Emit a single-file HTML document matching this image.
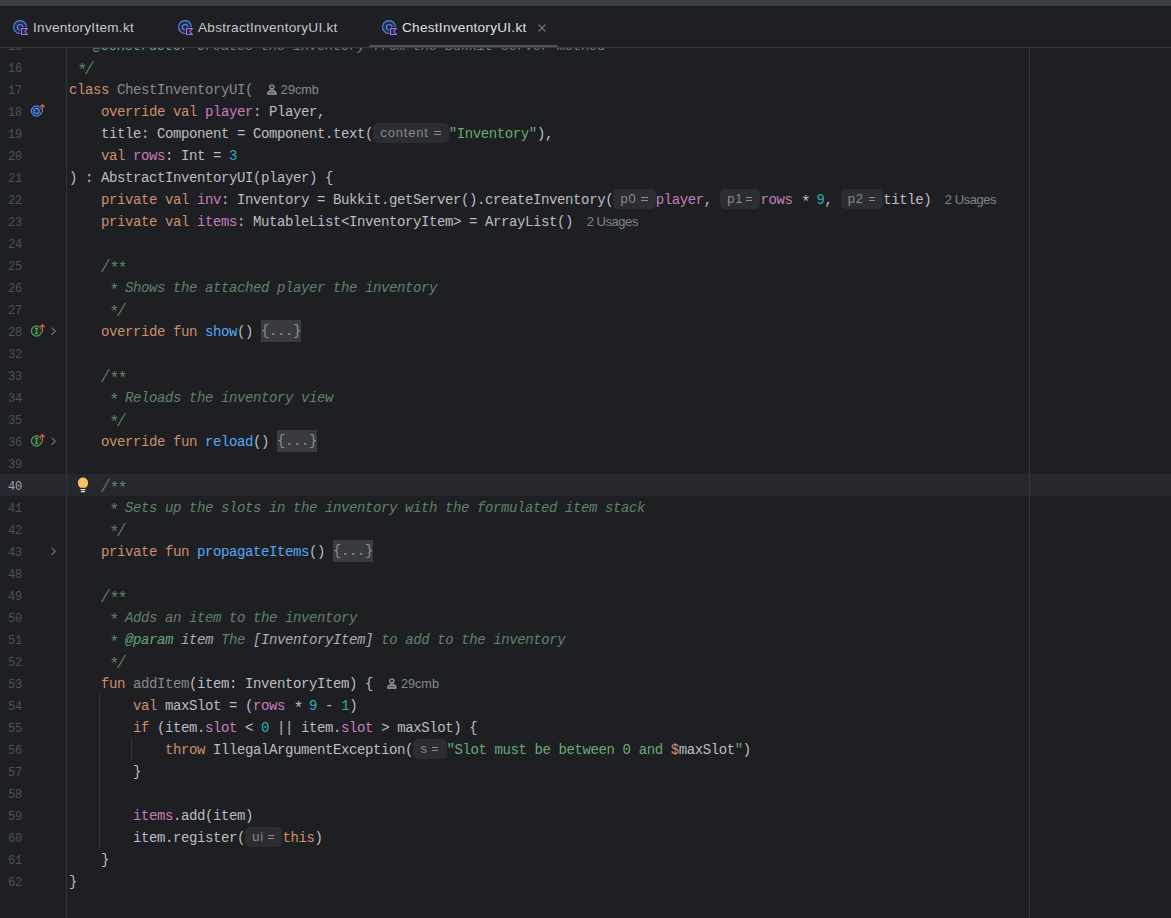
<!DOCTYPE html>
<html><head><meta charset="utf-8"><style>
*{margin:0;padding:0;box-sizing:border-box}
html,body{width:1171px;height:918px;overflow:hidden;background:#1e1f22}
body{position:relative;font-family:"Liberation Sans",sans-serif}
#top{position:absolute;left:0;top:0;width:1171px;height:6px;background:#3c3f43}
#tabs{position:absolute;left:0;top:6px;width:1171px;height:41px;background:#1e1f22;z-index:5}
#tabborder{position:absolute;left:0;top:47px;width:1171px;height:1px;background:#393b40;z-index:6}
.tab{position:absolute;top:13.5px;font-size:13.6px;letter-spacing:0.27px;color:#c4c7cd;line-height:16px;white-space:nowrap}
.ticon{position:absolute}
#uline{position:absolute;left:369px;top:39px;width:189px;height:3px;border-radius:2px;background:#4e5157}
#close{position:absolute;left:537px;top:16.5px}
#editor{position:absolute;left:0;top:48px;width:1171px;height:870px;overflow:hidden}
.row{position:absolute;left:0;width:1171px;height:22px}
.row.cur{background:#26282e}
.ln{position:absolute;left:0;width:22px;text-align:right;top:2px;font-family:"Liberation Mono",monospace;font-size:12px;letter-spacing:-0.2px;line-height:22px;color:#4b5059}
.row.cur .ln{color:#a1a3ab}
.code{position:absolute;left:69px;top:1px;font-family:"Liberation Mono",monospace;font-size:14px;letter-spacing:-0.4px;line-height:22px;white-space:pre;color:#bcbec4}
.k{color:#cf8e6d} .t{color:#bcbec4} .p{color:#c77dbb} .f{color:#56a8f5} .s{color:#6aab73} .n{color:#2aacb8}
.c{color:#5f826b;font-style:italic} .u{color:#868a91} .tag{color:#67a37c;font-style:italic} .docv{color:#abadb3;font-style:italic} .docl{color:#abadb3;font-style:italic}
.hint{display:inline-block;font-family:"Liberation Sans",sans-serif;font-size:13px;letter-spacing:0;color:#868a91;background:#2b2d30;border-radius:5px;height:19.5px;line-height:20px;padding:0;margin:0;vertical-align:top;margin-top:0px;position:relative;top:0px}
.hl{position:absolute;left:7.3px;top:0;letter-spacing:0.8px} .he{position:absolute;right:8.3px;top:8.3px;width:6.4px;height:4px;border-top:1.1px solid #868a91;border-bottom:1.1px solid #868a91}
.usg{display:inline-block;font-family:"Liberation Sans",sans-serif;font-size:13px;letter-spacing:-0.45px;color:#80848b;margin-left:13.5px;vertical-align:top}
.auth{display:inline-block;position:relative;font-family:"Liberation Sans",sans-serif;font-size:12.7px;letter-spacing:0;color:#868a91;padding-left:27.8px;vertical-align:top}
.auth svg{position:absolute;left:14.2px;top:4px}
.fold{display:inline-block;color:#8c9098;background:#393b40;border-radius:0;height:22px;line-height:22px;margin-top:-1px;vertical-align:top}
#gsep{position:absolute;left:66px;top:48px;width:1px;height:870px;background:#313438;z-index:1}
#margin{position:absolute;left:1029px;top:48px;width:1px;height:870px;background:#393b40;z-index:1}
.guide{position:absolute;width:1px;background:#313438;z-index:1}
.gi{position:absolute;z-index:3}
.ast{display:inline-block;width:8px;font-style:normal;font-size:16px;position:relative;top:2.5px;text-align:center;text-indent:0.6px} .sl{display:inline-block;transform:scaleY(1.35) translateY(0.6px)}
#rowsbox{position:absolute;left:0;top:0}
</style></head><body>
<div id="top"></div>
<div id="tabs">
<svg class="ticon" style="left:12px;top:13px" width="18" height="18" viewBox="0 0 18 18">
<circle cx="8" cy="8" r="6.4" fill="#24304a" stroke="#548af7" stroke-width="1.05"/>
<path d="M11 8.2A2.8 2.8 0 1 0 8.2 11" fill="none" stroke="#548af7" stroke-width="1.05"/>
<rect x="8.3" y="8.3" width="8.4" height="8.4" fill="#1e1f22"/>
<path d="M9.5 9.5h5.8l-2.4 3 2.4 3H9.5z" fill="#2b2540" stroke="#a873ec" stroke-width="1.05" stroke-linejoin="miter"/>
</svg><div class="tab" style="left:33px">InventoryItem.kt</div>
<svg class="ticon" style="left:177px;top:13px" width="18" height="18" viewBox="0 0 18 18">
<circle cx="8" cy="8" r="6.4" fill="#24304a" stroke="#548af7" stroke-width="1.05"/>
<path d="M11 8.2A2.8 2.8 0 1 0 8.2 11" fill="none" stroke="#548af7" stroke-width="1.05"/>
<rect x="8.3" y="8.3" width="8.4" height="8.4" fill="#1e1f22"/>
<path d="M9.5 9.5h5.8l-2.4 3 2.4 3H9.5z" fill="#2b2540" stroke="#a873ec" stroke-width="1.05" stroke-linejoin="miter"/>
</svg><div class="tab" style="left:198px">AbstractInventoryUI.kt</div>
<svg class="ticon" style="left:381px;top:13px" width="18" height="18" viewBox="0 0 18 18">
<circle cx="8" cy="8" r="6.4" fill="#24304a" stroke="#548af7" stroke-width="1.05"/>
<path d="M11 8.2A2.8 2.8 0 1 0 8.2 11" fill="none" stroke="#548af7" stroke-width="1.05"/>
<rect x="8.3" y="8.3" width="8.4" height="8.4" fill="#1e1f22"/>
<path d="M9.5 9.5h5.8l-2.4 3 2.4 3H9.5z" fill="#2b2540" stroke="#a873ec" stroke-width="1.05" stroke-linejoin="miter"/>
</svg><div class="tab" style="left:402px;color:#dfe1e5">ChestInventoryUI.kt</div>
<svg id="close" width="10" height="10" viewBox="0 0 10 10"><path d="M1.5 1.5L8.5 8.5M8.5 1.5L1.5 8.5" stroke="#6f737a" stroke-width="1.1"/></svg>
<div id="uline"></div>
</div>
<div id="tabborder"></div>
<div id="gsep"></div>
<div id="margin"></div>
<div class="guide" style="left:99px;top:694px;height:154px"></div>
<div class="guide" style="left:131px;top:738px;height:22px"></div>
<svg class="gi" style="left:28px;top:100px" width="20" height="22" viewBox="0 0 20 22">
<circle cx="8.5" cy="11" r="5.1" fill="#1f2a40" stroke="#548af7" stroke-width="1.2"/>
<circle cx="8.5" cy="11" r="2.6" fill="#25324d" stroke="#548af7" stroke-width="1.2"/>
<path d="M14.4 12.2V4.6M12 7.2l2.4-2.6 2.4 2.6" fill="none" stroke="#1e1f22" stroke-width="3"/>
<path d="M14.4 12.2V4.6M12 7.2l2.4-2.6 2.4 2.6" fill="none" stroke="#db5c5c" stroke-width="1.2"/>
</svg><svg class="gi" style="left:28px;top:320px" width="20" height="22" viewBox="0 0 20 22">
<circle cx="8.5" cy="11" r="5.1" fill="#233424" stroke="#5aa65f" stroke-width="1.1"/>
<path d="M7.1 8.4h2.9M7.1 13.5h2.9M8.55 8.4v5.1" fill="none" stroke="#5aa65f" stroke-width="1.2"/>
<path d="M14.4 12.2V4.6M12 7.2l2.4-2.6 2.4 2.6" fill="none" stroke="#1e1f22" stroke-width="3"/>
<path d="M14.4 12.2V4.6M12 7.2l2.4-2.6 2.4 2.6" fill="none" stroke="#db5c5c" stroke-width="1.2"/>
</svg><svg class="gi" style="left:28px;top:430px" width="20" height="22" viewBox="0 0 20 22">
<circle cx="8.5" cy="11" r="5.1" fill="#233424" stroke="#5aa65f" stroke-width="1.1"/>
<path d="M7.1 8.4h2.9M7.1 13.5h2.9M8.55 8.4v5.1" fill="none" stroke="#5aa65f" stroke-width="1.2"/>
<path d="M14.4 12.2V4.6M12 7.2l2.4-2.6 2.4 2.6" fill="none" stroke="#1e1f22" stroke-width="3"/>
<path d="M14.4 12.2V4.6M12 7.2l2.4-2.6 2.4 2.6" fill="none" stroke="#db5c5c" stroke-width="1.2"/>
</svg><svg class="gi" style="left:48px;top:320px" width="10" height="22" viewBox="0 0 10 22">
<path d="M3.6 7.6l3.6 3.6-3.6 3.6" fill="none" stroke="#6f737a" stroke-width="1.2"/>
</svg><svg class="gi" style="left:48px;top:430px" width="10" height="22" viewBox="0 0 10 22">
<path d="M3.6 7.6l3.6 3.6-3.6 3.6" fill="none" stroke="#6f737a" stroke-width="1.2"/>
</svg><svg class="gi" style="left:48px;top:540px" width="10" height="22" viewBox="0 0 10 22">
<path d="M3.6 7.6l3.6 3.6-3.6 3.6" fill="none" stroke="#6f737a" stroke-width="1.2"/>
</svg><svg class="gi" style="left:76px;top:474px" width="14" height="22" viewBox="0 0 14 22">
<path d="M4.4 13.8C3.2 12.9 1.9 11.4 1.9 8.5A5.1 5.1 0 0 1 12.1 8.5C12.1 11.4 10.8 12.9 9.6 13.8z" fill="#f2c55c"/>
<rect x="4.4" y="15" width="5.2" height="1.2" rx="0.4" fill="#dfe1e5"/>
<rect x="4.9" y="17.1" width="4.2" height="1.2" rx="0.4" fill="#dfe1e5"/>
</svg>
<div id="rowsbox">
<div class="row" style="top:34px"><div class="ln">15</div><div class="code"><span class="c">&nbsp;<span class="ast">*</span>&nbsp;</span><span class="tag">@constructor</span><span class="c">&nbsp;Creates&nbsp;the&nbsp;inventory&nbsp;from&nbsp;the&nbsp;Bukkit&nbsp;server&nbsp;method</span></div></div>
<div class="row" style="top:56px"><div class="ln">16</div><div class="code"><span class="c">&nbsp;<span class="ast">*</span><span class="sl">/</span></span></div></div>
<div class="row" style="top:78px"><div class="ln">17</div><div class="code"><span class="k">class&nbsp;</span><span class="u">ChestInventoryUI(</span><span class="auth"><svg width="11" height="13" viewBox="0 0 11 13"><rect x="2.8" y="2" width="4.1" height="3.8" rx="1.3" fill="#2a2c30" stroke="#a3a6ad" stroke-width="1.15"/><path d="M0.7 11.1C0.7 8.6 2.6 7.6 4.85 7.6S9 8.6 9 11.1Z" fill="#55585e" stroke="#a3a6ad" stroke-width="1.15" stroke-linejoin="round"/></svg>29cmb</span></div></div>
<div class="row" style="top:100px"><div class="ln">18</div><div class="code"><span class="t">&nbsp;&nbsp;&nbsp;&nbsp;</span><span class="k">override&nbsp;val&nbsp;</span><span class="p">player</span><span class="t">:&nbsp;Player,</span></div></div>
<div class="row" style="top:122px"><div class="ln">19</div><div class="code"><span class="t">&nbsp;&nbsp;&nbsp;&nbsp;title:&nbsp;Component&nbsp;=&nbsp;Component.text(</span><span class="hint" style="width:75.8px"><span class="hl">content</span><span class="he"></span></span><span class="s">&quot;Inventory&quot;</span><span class="t">),</span></div></div>
<div class="row" style="top:144px"><div class="ln">20</div><div class="code"><span class="t">&nbsp;&nbsp;&nbsp;&nbsp;</span><span class="k">val&nbsp;</span><span class="p">rows</span><span class="t">:&nbsp;Int&nbsp;=&nbsp;</span><span class="n">3</span></div></div>
<div class="row" style="top:166px"><div class="ln">21</div><div class="code"><span class="t">)&nbsp;:&nbsp;AbstractInventoryUI(player)&nbsp;{</span></div></div>
<div class="row" style="top:188px"><div class="ln">22</div><div class="code"><span class="t">&nbsp;&nbsp;&nbsp;&nbsp;</span><span class="k">private&nbsp;val&nbsp;</span><span class="p">inv</span><span class="t">:&nbsp;Inventory&nbsp;=&nbsp;Bukkit.getServer().createInventory(</span><span class="hint" style="width:42.7px"><span class="hl">p0</span><span class="he"></span></span><span class="p">player</span><span class="t">,&nbsp;</span><span class="hint" style="width:40.6px"><span class="hl">p1</span><span class="he"></span></span><span class="p">rows</span><span class="t">&nbsp;<span class="ast">*</span>&nbsp;</span><span class="n">9</span><span class="t">,&nbsp;</span><span class="hint" style="width:42.7px"><span class="hl">p2</span><span class="he"></span></span><span class="t">title)</span><span class="usg">2 Usages</span></div></div>
<div class="row" style="top:210px"><div class="ln">23</div><div class="code"><span class="t">&nbsp;&nbsp;&nbsp;&nbsp;</span><span class="k">private&nbsp;val&nbsp;</span><span class="p">items</span><span class="t">:&nbsp;MutableList&lt;InventoryItem&gt;&nbsp;=&nbsp;ArrayList()</span><span class="usg">2 Usages</span></div></div>
<div class="row" style="top:232px"><div class="ln">24</div><div class="code"></div></div>
<div class="row" style="top:254px"><div class="ln">25</div><div class="code"><span class="c">&nbsp;&nbsp;&nbsp;&nbsp;<span class="sl">/</span><span class="ast">*</span><span class="ast">*</span></span></div></div>
<div class="row" style="top:276px"><div class="ln">26</div><div class="code"><span class="c">&nbsp;&nbsp;&nbsp;&nbsp;&nbsp;<span class="ast">*</span>&nbsp;Shows&nbsp;the&nbsp;attached&nbsp;player&nbsp;the&nbsp;inventory</span></div></div>
<div class="row" style="top:298px"><div class="ln">27</div><div class="code"><span class="c">&nbsp;&nbsp;&nbsp;&nbsp;&nbsp;<span class="ast">*</span><span class="sl">/</span></span></div></div>
<div class="row" style="top:320px"><div class="ln">28</div><div class="code"><span class="t">&nbsp;&nbsp;&nbsp;&nbsp;</span><span class="k">override&nbsp;fun&nbsp;</span><span class="f">show</span><span class="t">()&nbsp;</span><span class="fold">{...}</span></div></div>
<div class="row" style="top:342px"><div class="ln">32</div><div class="code"></div></div>
<div class="row" style="top:364px"><div class="ln">33</div><div class="code"><span class="c">&nbsp;&nbsp;&nbsp;&nbsp;<span class="sl">/</span><span class="ast">*</span><span class="ast">*</span></span></div></div>
<div class="row" style="top:386px"><div class="ln">34</div><div class="code"><span class="c">&nbsp;&nbsp;&nbsp;&nbsp;&nbsp;<span class="ast">*</span>&nbsp;Reloads&nbsp;the&nbsp;inventory&nbsp;view</span></div></div>
<div class="row" style="top:408px"><div class="ln">35</div><div class="code"><span class="c">&nbsp;&nbsp;&nbsp;&nbsp;&nbsp;<span class="ast">*</span><span class="sl">/</span></span></div></div>
<div class="row" style="top:430px"><div class="ln">36</div><div class="code"><span class="t">&nbsp;&nbsp;&nbsp;&nbsp;</span><span class="k">override&nbsp;fun&nbsp;</span><span class="f">reload</span><span class="t">()&nbsp;</span><span class="fold">{...}</span></div></div>
<div class="row" style="top:452px"><div class="ln">39</div><div class="code"></div></div>
<div class="row cur" style="top:474px"><div class="ln">40</div><div class="code"><span class="c">&nbsp;&nbsp;&nbsp;&nbsp;<span class="sl">/</span><span class="ast">*</span><span class="ast">*</span></span></div></div>
<div class="row" style="top:496px"><div class="ln">41</div><div class="code"><span class="c">&nbsp;&nbsp;&nbsp;&nbsp;&nbsp;<span class="ast">*</span>&nbsp;Sets&nbsp;up&nbsp;the&nbsp;slots&nbsp;in&nbsp;the&nbsp;inventory&nbsp;with&nbsp;the&nbsp;formulated&nbsp;item&nbsp;stack</span></div></div>
<div class="row" style="top:518px"><div class="ln">42</div><div class="code"><span class="c">&nbsp;&nbsp;&nbsp;&nbsp;&nbsp;<span class="ast">*</span><span class="sl">/</span></span></div></div>
<div class="row" style="top:540px"><div class="ln">43</div><div class="code"><span class="t">&nbsp;&nbsp;&nbsp;&nbsp;</span><span class="k">private&nbsp;fun&nbsp;</span><span class="f">propagateItems</span><span class="t">()&nbsp;</span><span class="fold">{...}</span></div></div>
<div class="row" style="top:562px"><div class="ln">48</div><div class="code"></div></div>
<div class="row" style="top:584px"><div class="ln">49</div><div class="code"><span class="c">&nbsp;&nbsp;&nbsp;&nbsp;<span class="sl">/</span><span class="ast">*</span><span class="ast">*</span></span></div></div>
<div class="row" style="top:606px"><div class="ln">50</div><div class="code"><span class="c">&nbsp;&nbsp;&nbsp;&nbsp;&nbsp;<span class="ast">*</span>&nbsp;Adds&nbsp;an&nbsp;item&nbsp;to&nbsp;the&nbsp;inventory</span></div></div>
<div class="row" style="top:628px"><div class="ln">51</div><div class="code"><span class="c">&nbsp;&nbsp;&nbsp;&nbsp;&nbsp;<span class="ast">*</span>&nbsp;</span><span class="tag">@param</span><span class="c">&nbsp;</span><span class="docv">item</span><span class="c">&nbsp;The&nbsp;</span><span class="docl">[InventoryItem]</span><span class="c">&nbsp;to&nbsp;add&nbsp;to&nbsp;the&nbsp;inventory</span></div></div>
<div class="row" style="top:650px"><div class="ln">52</div><div class="code"><span class="c">&nbsp;&nbsp;&nbsp;&nbsp;&nbsp;<span class="ast">*</span><span class="sl">/</span></span></div></div>
<div class="row" style="top:672px"><div class="ln">53</div><div class="code"><span class="t">&nbsp;&nbsp;&nbsp;&nbsp;</span><span class="k">fun&nbsp;</span><span class="u">addItem</span><span class="t">(item:&nbsp;InventoryItem)&nbsp;{</span><span class="auth"><svg width="11" height="13" viewBox="0 0 11 13"><rect x="2.8" y="2" width="4.1" height="3.8" rx="1.3" fill="#2a2c30" stroke="#a3a6ad" stroke-width="1.15"/><path d="M0.7 11.1C0.7 8.6 2.6 7.6 4.85 7.6S9 8.6 9 11.1Z" fill="#55585e" stroke="#a3a6ad" stroke-width="1.15" stroke-linejoin="round"/></svg>29cmb</span></div></div>
<div class="row" style="top:694px"><div class="ln">54</div><div class="code"><span class="t">&nbsp;&nbsp;&nbsp;&nbsp;&nbsp;&nbsp;&nbsp;&nbsp;</span><span class="k">val&nbsp;</span><span class="t">maxSlot&nbsp;=&nbsp;(</span><span class="p">rows</span><span class="t">&nbsp;<span class="ast">*</span>&nbsp;</span><span class="n">9</span><span class="t">&nbsp;-&nbsp;</span><span class="n">1</span><span class="t">)</span></div></div>
<div class="row" style="top:716px"><div class="ln">55</div><div class="code"><span class="t">&nbsp;&nbsp;&nbsp;&nbsp;&nbsp;&nbsp;&nbsp;&nbsp;</span><span class="k">if&nbsp;</span><span class="t">(item.</span><span class="p">slot</span><span class="t">&nbsp;&lt;&nbsp;</span><span class="n">0</span><span class="t">&nbsp;||&nbsp;item.</span><span class="p">slot</span><span class="t">&nbsp;&gt;&nbsp;maxSlot)&nbsp;{</span></div></div>
<div class="row" style="top:738px"><div class="ln">56</div><div class="code"><span class="t">&nbsp;&nbsp;&nbsp;&nbsp;&nbsp;&nbsp;&nbsp;&nbsp;&nbsp;&nbsp;&nbsp;&nbsp;</span><span class="k">throw&nbsp;</span><span class="t">IllegalArgumentException(</span><span class="hint" style="width:33.5px"><span class="hl">s</span><span class="he"></span></span><span class="s">&quot;Slot&nbsp;must&nbsp;be&nbsp;between&nbsp;0&nbsp;and&nbsp;</span><span class="k">$</span><span class="t">maxSlot</span><span class="s">&quot;</span><span class="t">)</span></div></div>
<div class="row" style="top:760px"><div class="ln">57</div><div class="code"><span class="t">&nbsp;&nbsp;&nbsp;&nbsp;&nbsp;&nbsp;&nbsp;&nbsp;}</span></div></div>
<div class="row" style="top:782px"><div class="ln">58</div><div class="code"></div></div>
<div class="row" style="top:804px"><div class="ln">59</div><div class="code"><span class="t">&nbsp;&nbsp;&nbsp;&nbsp;&nbsp;&nbsp;&nbsp;&nbsp;</span><span class="p">items</span><span class="t">.add(item)</span></div></div>
<div class="row" style="top:826px"><div class="ln">60</div><div class="code"><span class="t">&nbsp;&nbsp;&nbsp;&nbsp;&nbsp;&nbsp;&nbsp;&nbsp;item.register(</span><span class="hint" style="width:37.4px"><span class="hl">ui</span><span class="he"></span></span><span class="k">this</span><span class="t">)</span></div></div>
<div class="row" style="top:848px"><div class="ln">61</div><div class="code"><span class="t">&nbsp;&nbsp;&nbsp;&nbsp;}</span></div></div>
<div class="row" style="top:870px"><div class="ln">62</div><div class="code"><span class="t">}</span></div></div>
</div>
</body></html>
